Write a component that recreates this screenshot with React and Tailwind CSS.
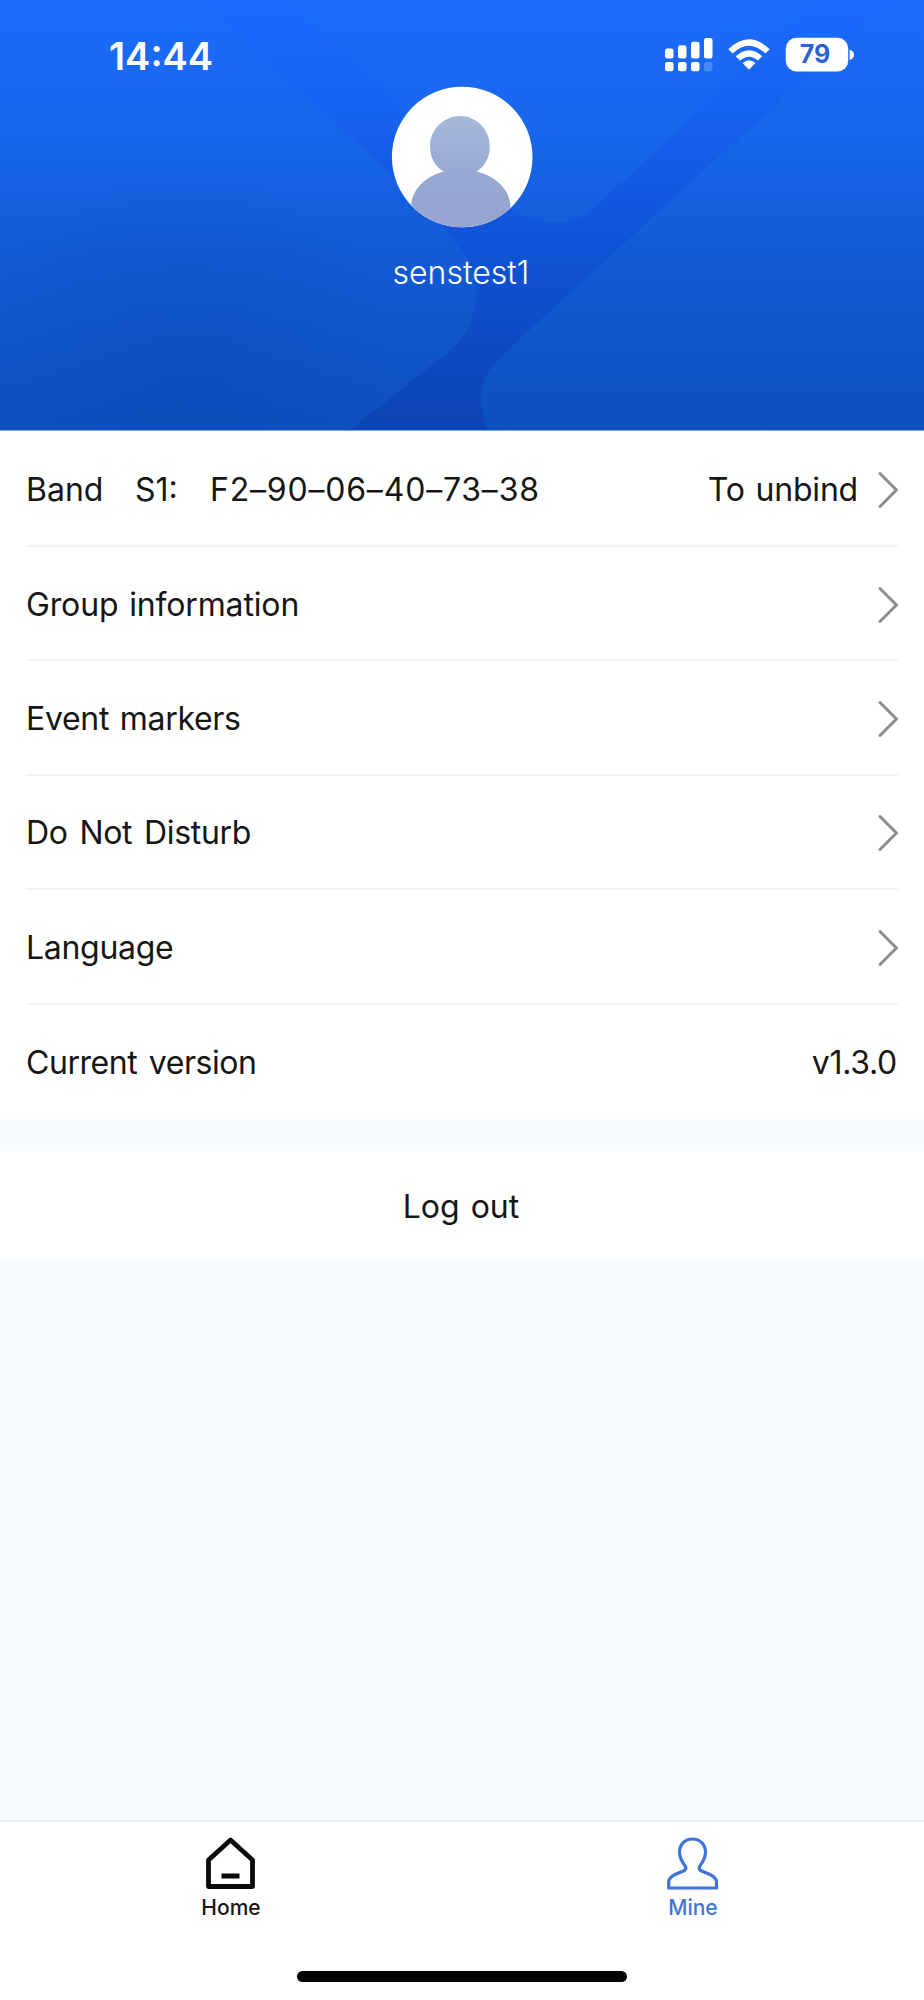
const rows = [
  { label: "Group information", fit: "tracking-[-0.15px] [word-spacing:2px]" },
  { label: "Event markers", fit: "tracking-[-0.3px] [word-spacing:2px]" },
  { label: "Do Not Disturb", fit: "tracking-[-0.3px] [word-spacing:3px]" },
  { label: "Language", fit: "tracking-[-0.3px]" },
];

function Chevron() {
  return (
    <svg className="h-9 w-5 shrink-0" viewBox="0 0 20 36" fill="none" stroke="#8c8c8c" strokeWidth="2.9" strokeLinecap="round">
      <path d="M2 1.500 18.400 18 2 34.500" />
    </svg>
  );
}

function HeaderArt() {
  return (
    <svg className="absolute inset-0 h-full w-full" viewBox="0 0 924 431" preserveAspectRatio="none">
      <defs>
        <linearGradient id="band" x1="0" y1="0" x2="0" y2="1">
          <stop offset="0" stopColor="#1b6aff" />
          <stop offset="0.25" stopColor="#1762f0" />
          <stop offset="0.55" stopColor="#1054d8" />
          <stop offset="1" stopColor="#0b44b3" />
        </linearGradient>
        <linearGradient id="lobe" gradientUnits="userSpaceOnUse" x1="0" y1="0" x2="0" y2="431">
          <stop offset="0" stopColor="#1b6cfc" />
          <stop offset="0.3" stopColor="#1866ec" />
          <stop offset="0.6" stopColor="#125bd5" />
          <stop offset="1" stopColor="#0d50be" />
        </linearGradient>
        <radialGradient id="shade" gradientUnits="userSpaceOnUse" cx="190" cy="390" r="220">
          <stop offset="0" stopColor="#0a48b4" stopOpacity="0.4" />
          <stop offset="1" stopColor="#0a48b4" stopOpacity="0" />
        </radialGradient>
      </defs>
      <rect width="924" height="431" fill="url(#band)" />
      <path d="M0 0H203L400 184 445 230Q476 262 476 293 476 330 448 353L350 431H0Z" fill="url(#lobe)" />
      <path d="M0 0H203L400 184 445 230Q476 262 476 293 476 330 448 353L350 431H0Z" fill="url(#shade)" />
      <path d="M285 0 513 212Q534 223 557 223 577 223 594 208L821 0Z" fill="url(#lobe)" />
      <path d="M890 0 501 357Q470 386 487 431H924V0Z" fill="url(#lobe)" />
    </svg>
  );
}

function StatusIcons() {
  return (
    <svg className="h-10 w-[192px]" viewBox="664 34 192 40" fill="#fff">
      <rect x="665" y="48.5" width="8.5" height="10" rx="2.2" />
      <rect x="678" y="45.3" width="8.5" height="13.2" rx="2.2" />
      <rect x="691" y="41.7" width="8.5" height="16.8" rx="2.2" />
      <rect x="704" y="38" width="8.5" height="20.5" rx="2.2" />
      <rect x="665" y="62" width="8.5" height="9.3" rx="2.2" />
      <rect x="678" y="62" width="8.5" height="9.3" rx="2.2" />
      <rect x="691" y="62" width="8.5" height="9.3" rx="2.2" />
      <rect x="704" y="62" width="8.5" height="9.3" rx="2.2" opacity="0.2" />
      <path d="M728.3 49.2Q749 29.2 769.7 49.2L765.3 53.4Q749 38 732.7 53.4Z" />
      <path d="M735.7 56.3Q749 44.2 762.3 56.3L757.9 60.6Q749 53 740.1 60.6Z" />
      <path d="M742.6 63Q749 57.6 755.4 63L749 69.8Z" />
      <rect x="785.8" y="37.8" width="62.4" height="33.6" rx="10.5" />
      <path d="M849.6 49.8Q854 51 854 54.8 854 58.8 849.6 60Z" />
    </svg>
  );
}

function Avatar() {
  return (
    <svg className="h-[142px] w-[142px]" viewBox="391.5 86 142 142">
      <defs>
        <linearGradient id="person" x1="0" y1="116" x2="0" y2="228" gradientUnits="userSpaceOnUse">
          <stop offset="0" stopColor="#a7b8da" />
          <stop offset="0.55" stopColor="#96a8d3" />
          <stop offset="1" stopColor="#98a4d0" />
        </linearGradient>
        <clipPath id="disc">
          <circle cx="462.7" cy="157" r="70.3" />
        </clipPath>
      </defs>
      <circle cx="462.7" cy="157" r="70.3" fill="#fff" />
      <path
        clipPath="url(#disc)"
        fill="url(#person)"
        d="M460.600 116C477 116 490.300 129.500 490.300 146.500 490.300 157 485.500 166.500 477 171.500 496 176 510.800 190 510.800 206V230H411.800V206C411.800 190 426 176 444.500 171.500 435 166.500 430.600 157 430.600 146.500 430.600 129.500 443.900 116 460.600 116Z"
      />
    </svg>
  );
}

export default function App() {
  return (
    <div className="flex h-[2000px] w-[924px] flex-col overflow-hidden bg-[#f7faff] font-['Inter',sans-serif] text-[32px] text-[#161616]">
      <header className="relative h-[431px] shrink-0 border-b border-[#7ea6ea]">
        <HeaderArt />
        <div className="relative flex h-full flex-col items-center">
          <div className="flex h-[86px] w-full items-start justify-between pt-[34px] pr-[68px] pl-[109px] text-white">
            <span className="text-[38px] leading-[44px] font-semibold">14:44</span>
            <div className="relative">
              <StatusIcons />
              <span className="absolute top-[4px] left-[120px] w-[62px] text-center text-[25px] leading-[32px] font-bold text-[#2a63d4]">79</span>
            </div>
          </div>
          <Avatar />
          <p className="mt-[25px] mr-[2px] text-[32px] leading-[40px] font-[350] tracking-[0px] text-white">senstest1</p>
        </div>
      </header>

      <main className="shrink-0 bg-white px-[26px]">
        <div className="flex h-[116px] items-center border-b-2 border-[#f3f3f3] pt-[4px]">
          <span className="w-[109px]">Band</span>
          <span className="w-[75px]">S1:</span>
          <span className="tracking-[0.8px]">F2–90–06–40–73–38</span>
          <span className="mr-[20px] ml-auto tracking-[-0.2px] [word-spacing:2px]">To unbind</span>
          <Chevron />
        </div>
        {rows.map((r) => (
          <div key={r.label} className="flex h-[114.4px] items-center justify-between border-b-2 border-[#f3f3f3] pt-[3px]">
            <span className={r.fit}>{r.label}</span>
            <Chevron />
          </div>
        ))}
        <div className="flex h-[114px] items-center justify-between pt-[2px]">
          <span className="tracking-[-0.45px] [word-spacing:3px]">Current version</span>
          <span className="mr-px tracking-[-0.3px]">v1.3.0</span>
        </div>
      </main>

      <button className="mt-8 flex h-[108px] w-full shrink-0 items-center justify-center bg-white pt-[4px] pr-[2px] [word-spacing:2px]">Log out</button>

      <nav className="mt-auto flex h-[180px] shrink-0 flex-col items-center border-t-2 border-[#eeeff4] bg-white">
        <div className="flex w-full flex-1">
          <div className="flex flex-1 flex-col items-center pt-[15px]">
            <svg className="h-[53px] w-[52px]" viewBox="0 0 52 53" fill="none" stroke="#0b0b0b" strokeWidth="4.8" strokeLinejoin="round">
              <path d="M25.500 3 47.500 23V49.500H3.500V23ZM16.500 39H34.500" />
            </svg>
            <span className="mt-[5px] text-[21px] leading-[26px] font-medium">Home</span>
          </div>
          <div className="flex flex-1 flex-col items-center pt-[15px] text-[#4273d9]">
            <svg className="h-[53px] w-[52px]" viewBox="0 0 52 53" fill="none" stroke="currentColor" strokeWidth="3.2" strokeLinejoin="round">
              <path d="M25.500 2C33.500 2 38.500 8 38.500 15.500 38.500 21 35.500 25.500 32.500 29.500 31.500 32 32.500 33 34.500 34 43.500 37.500 49.500 40 49.500 45V51H1.700V45C1.700 40 7.500 37.500 16.500 34 18.500 33 19.500 32 18.500 29.500 15.500 25.500 12.500 21 12.500 15.500 12.500 8 17.500 2 25.500 2Z" />
            </svg>
            <span className="mt-[5px] text-[21px] leading-[26px] font-medium">Mine</span>
          </div>
        </div>
        <div className="mb-[18px] h-[11px] w-[330px] rounded-full bg-black" />
      </nav>
    </div>
  );
}
